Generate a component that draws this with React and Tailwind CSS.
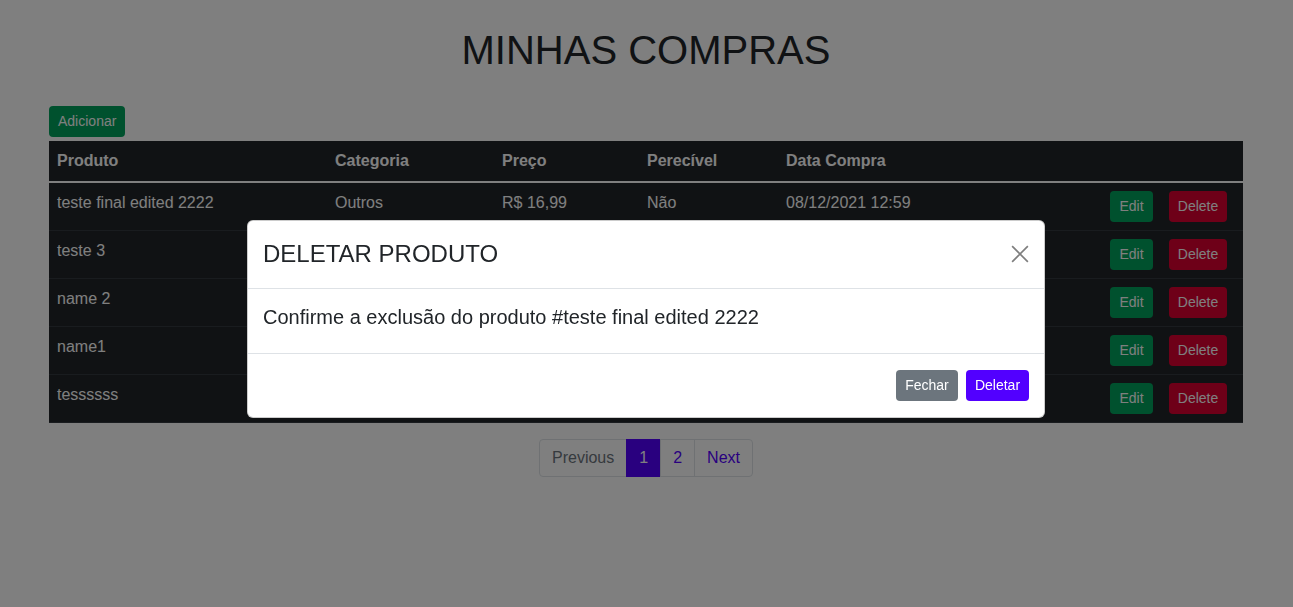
import React from 'react';

const rows = [
  { produto: 'teste final edited 2222', categoria: 'Outros', preco: 'R$ 16,99', perecivel: 'Não', data: '08/12/2021 12:59' },
  { produto: 'teste 3', categoria: 'Outros', preco: 'R$ 10,00', perecivel: 'Sim', data: '07/12/2021 18:20' },
  { produto: 'name 2', categoria: 'Outros', preco: 'R$ 5,00', perecivel: 'Não', data: '07/12/2021 17:45' },
  { produto: 'name1', categoria: 'Outros', preco: 'R$ 2,50', perecivel: 'Sim', data: '07/12/2021 17:40' },
  { produto: 'tessssss', categoria: 'Outros', preco: 'R$ 1,00', perecivel: 'Não', data: '07/12/2021 17:30' },
];

const App = () => {
  return (
    <div className="relative min-h-[607px] bg-white font-['Liberation_Sans',Arial,sans-serif] text-[#212529] text-base">
      {/* Página */}
      <div className="pl-[49px] pr-[50px] pt-[26px]">
        <h1 className="text-center text-[40px] leading-[48px] font-normal mb-[32px]">MINHAS COMPRAS</h1>

        <button className="h-[31px] px-[9px] pb-[1px] text-sm leading-[21px] rounded-[4px] bg-[#00a35d] text-white mb-[4px]">
          Adicionar
        </button>

        <table className="w-full table-fixed border-collapse bg-[#212529] text-white">
          <colgroup>
            <col className="w-[278px]" />
            <col className="w-[167px]" />
            <col className="w-[145px]" />
            <col className="w-[139px]" />
            <col className="w-[324px]" />
            <col className="w-[59px]" />
            <col className="w-[82px]" />
          </colgroup>
          <thead>
            <tr className="border-b-2 border-white text-left">
              <th className="px-2 py-2 leading-6 font-bold">Produto</th>
              <th className="px-2 py-2 leading-6 font-bold">Categoria</th>
              <th className="px-2 py-2 leading-6 font-bold">Preço</th>
              <th className="px-2 py-2 leading-6 font-bold">Perecível</th>
              <th className="px-2 py-2 leading-6 font-bold">Data Compra</th>
              <th className="px-2 py-2"></th>
              <th className="px-2 py-2"></th>
            </tr>
          </thead>
          <tbody>
            {rows.map((r, i) => (
              <tr key={i} className="border-b border-[#32383e] align-top">
                <td className="px-2 py-2 leading-6">{r.produto}</td>
                <td className="px-2 py-2 leading-6">{r.categoria}</td>
                <td className="px-2 py-2 leading-6">{r.preco}</td>
                <td className="px-2 py-2 leading-6">{r.perecivel}</td>
                <td className="px-2 py-2 leading-6">{r.data}</td>
                <td className="px-2 py-2">
                  <button className="h-[31px] w-[43px] pb-[1px] text-sm leading-[21px] rounded-[4px] bg-[#00a35d] text-white">Edit</button>
                </td>
                <td className="px-2 py-2">
                  <button className="h-[31px] w-[58px] pb-[1px] text-sm leading-[21px] rounded-[4px] bg-[#dc0030] text-white">Delete</button>
                </td>
              </tr>
            ))}
          </tbody>
        </table>

        {/* Paginação */}
        <div className="flex justify-center mt-[16px]">
          <div className="flex text-base leading-6">
            <span className="px-3 py-[6px] border border-[#dee2e6] rounded-l-[4px] text-[#6c757d]">Previous</span>
            <span className="px-3 py-[6px] border border-[#5200ff] bg-[#5200ff] text-white -ml-px">1</span>
            <span className="px-3 py-[6px] border border-[#dee2e6] text-[#5200ff] -ml-px">2</span>
            <span className="px-3 py-[6px] border border-[#dee2e6] rounded-r-[4px] text-[#5200ff] -ml-px">Next</span>
          </div>
        </div>
      </div>

      {/* Backdrop + modal */}
      <div className="fixed inset-0 bg-black/50">
        <div className="pt-[220px] pl-[247px]">
          <div className="w-[798px] bg-white rounded-[6px] border border-black/20">
            <div className="flex items-center justify-between pl-[15px] pr-4 pt-[15px] pb-4 border-b border-[#dee2e6]">
              <h4 className="text-2xl leading-9 font-normal">DELETAR PRODUTO</h4>
              <button className="w-6 h-6 flex items-center justify-center opacity-50 mr-[-4px]" aria-label="Close">
                <svg viewBox="0 0 16 16" className="w-[18px] h-[18px]" fill="none" stroke="#000" strokeWidth="1.5">
                  <path d="M1 1 15 15M15 1 1 15" />
                </svg>
              </button>
            </div>
            <div className="pl-[15px] pr-4 pt-4 pb-4 border-b border-[#dee2e6]">
              <h5 className="text-xl leading-6 font-normal mb-2">Confirme a exclusão do produto #teste final edited 2222</h5>
            </div>
            <div className="flex justify-end gap-2 pl-4 pr-[15px] py-4">
              <button className="h-[31px] w-[62px] pb-[1px] text-sm leading-[21px] rounded-[4px] bg-[#6c757d] text-white">Fechar</button>
              <button className="h-[31px] w-[63px] pb-[1px] text-sm leading-[21px] rounded-[4px] bg-[#5200ff] text-white">Deletar</button>
            </div>
          </div>
        </div>
      </div>
    </div>
  );
};

export default App;
